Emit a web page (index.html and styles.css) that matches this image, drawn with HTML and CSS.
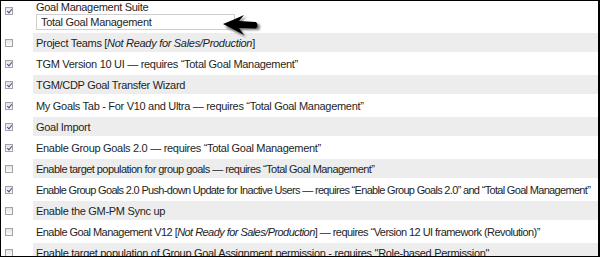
FILE: index.html
```html
<!DOCTYPE html>
<html lang="en">
<head>
  <meta charset="UTF-8" />
  <title>Goal Management Settings</title>
  <link rel="stylesheet" href="styles.css">
</head>
<body>
  <div class="frame">
    <div class="list">
      <div class="row first">
        <div class="check"><span class="box on"></span></div>
        <div class="label">
          <div class="title">Goal Management Suite</div>
          <div class="field">Total Goal Management</div>
        </div>
      </div>
      <div class="row alt">
        <div class="check"><span class="box"></span></div>
        <div class="label">Project Teams [<em>Not Ready for Sales/Production</em>]</div>
      </div>
      <div class="row">
        <div class="check"><span class="box on"></span></div>
        <div class="label">TGM Version 10 UI — requires “Total Goal Management”</div>
      </div>
      <div class="row alt">
        <div class="check"><span class="box on"></span></div>
        <div class="label">TGM/CDP Goal Transfer Wizard</div>
      </div>
      <div class="row">
        <div class="check"><span class="box on"></span></div>
        <div class="label">My Goals Tab - For V10 and Ultra — requires “Total Goal Management”</div>
      </div>
      <div class="row alt">
        <div class="check"><span class="box on"></span></div>
        <div class="label">Goal Import</div>
      </div>
      <div class="row">
        <div class="check"><span class="box on"></span></div>
        <div class="label">Enable Group Goals 2.0 — requires “Total Goal Management”</div>
      </div>
      <div class="row alt">
        <div class="check"><span class="box"></span></div>
        <div class="label tight">Enable target population for group goals — requires “Total Goal Management”</div>
      </div>
      <div class="row">
        <div class="check"><span class="box on"></span></div>
        <div class="label tighter">Enable Group Goals 2.0 Push-down Update for Inactive Users — requires “Enable Group Goals 2.0” and “Total Goal Management”</div>
      </div>
      <div class="row alt">
        <div class="check"><span class="box"></span></div>
        <div class="label">Enable the GM-PM Sync up</div>
      </div>
      <div class="row">
        <div class="check"><span class="box"></span></div>
        <div class="label tight">Enable Goal Management V12 [<em>Not Ready for Sales/Production</em>] — requires “Version 12 UI framework (Revolution)”</div>
      </div>
      <div class="row alt">
        <div class="check"><span class="box"></span></div>
        <div class="label">Enable target population of Group Goal Assignment permission - requires "Role-based Permission"</div>
      </div>
    </div>

    <svg class="arrow" width="600" height="40" viewBox="0 0 600 40">
      <defs>
        <filter id="soft" x="-20%" y="-50%" width="140%" height="200%">
          <feGaussianBlur stdDeviation="1.2" />
        </filter>
      </defs>
      <path d="M224,26 Q234,21 245,16 L240,22 L258,23 Q260,26 258,29 L240,29 L245,36 Q234,31 224,26 Z" fill="#777" filter="url(#soft)" />
      <path d="M222,23 Q232,19 243,14 L238,20 L255,21 Q258,24 255,27.5 L238,27 L243,34 Q232,28 222,23 Z" fill="#000" />
    </svg>
  </div>
</body>
</html>
```

FILE: styles.css
```css
* {
  margin: 0;
  padding: 0;
  box-sizing: border-box;
}

body {
  font-family: "Liberation Sans", Arial, sans-serif;
  font-size: 11px;
  letter-spacing: -0.3px;
  color: #1e1e1e;
  background: #fff;
}

.frame {
  position: relative;
  width: 600px;
  height: 257px;
  border: 1px solid #000;
  border-right-width: 2px;
  overflow: hidden;
}

.list {
  display: flex;
  flex-direction: column;
  gap: 2px;
}

.row {
  display: flex;
  gap: 2px;
  height: 19px;
}

.row.first {
  height: 30px;
}

.check {
  flex: 0 0 30px;
  display: flex;
  align-items: center;
  padding-left: 4px;
}

.row.first .check {
  align-items: flex-start;
  padding-top: 6px;
}

.box {
  width: 8px;
  height: 8px;
  border: 1px solid #a4a4a4;
  background: linear-gradient(#e4e4e4, #fafafa);
  position: relative;
}

.box.on::after {
  content: "";
  position: absolute;
  left: 2px;
  top: 0;
  width: 2px;
  height: 4px;
  border: solid #3a4fa8;
  border-width: 0 1px 1px 0;
  transform: rotate(40deg);
}

.label {
  flex: 1;
  min-width: 0;
  display: flex;
  align-items: center;
  padding-left: 3px;
  white-space: nowrap;
}

.label.tight {
  letter-spacing: -0.55px;
}

.label.tighter {
  letter-spacing: -0.68px;
}

.row.alt .label {
  background: #ededed;
}

.row.first .label {
  flex-direction: column;
  align-items: flex-start;
}

.title {
  line-height: 13px;
}

.field {
  width: 199px;
  height: 16px;
  border: 1px solid #cfcfcf;
  padding-left: 4px;
  line-height: 14px;
}

.arrow {
  position: absolute;
  left: 0;
  top: 0;
}
```
